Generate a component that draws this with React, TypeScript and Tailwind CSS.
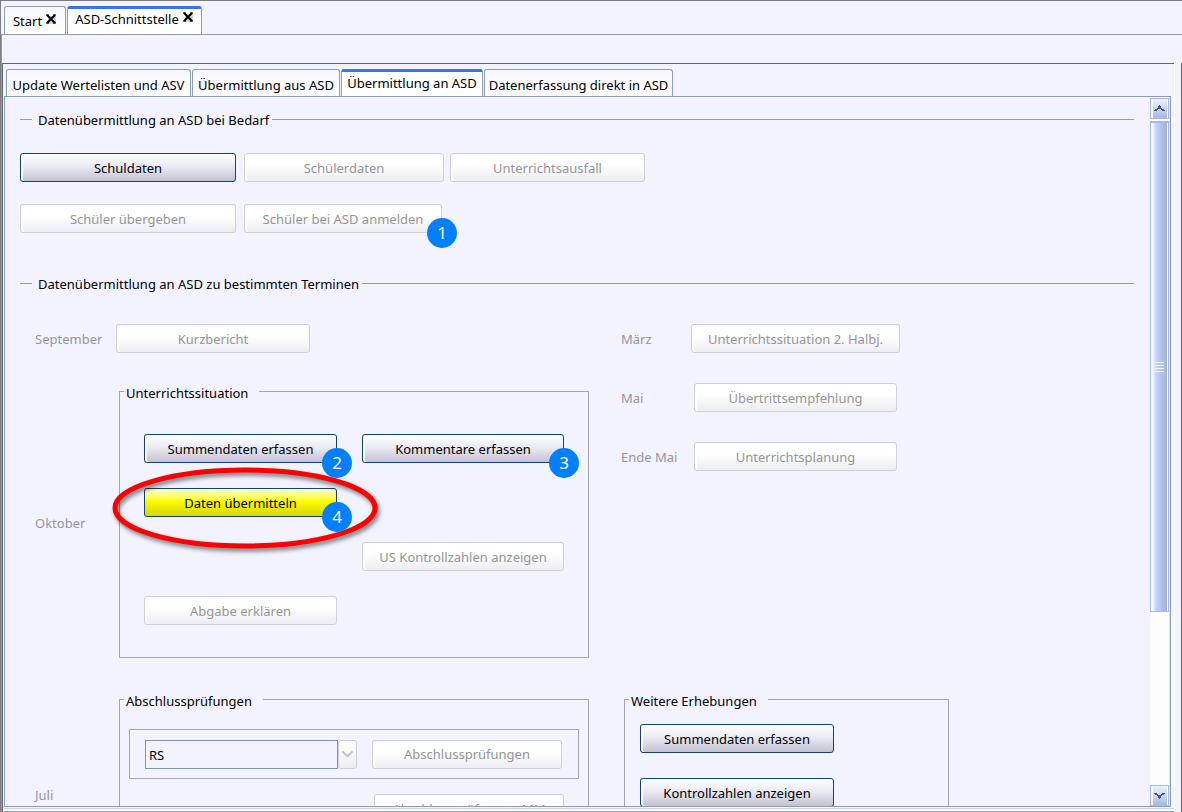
import type { ReactNode } from 'react';
import clsx from 'clsx';

type ActionProps = {
  children: ReactNode;
  width: string;
  disabled?: boolean;
  highlight?: boolean;
};

function Action({ children, width, disabled, highlight }: ActionProps) {
  return (
    <button
      type="button"
      disabled={disabled}
      className={clsx(
        'h-[29px] shrink-0 rounded-[3px] border bg-linear-to-b text-center whitespace-nowrap',
        width,
        disabled && 'border-[#cfcfda] from-white from-40% to-[#ededf2] text-[#969696] shadow-[inset_2px_0_0_#ffffff]',
        highlight && 'border-[#14417c] from-[#ffffc8] via-[#ffff00] via-40% to-[#d6d600]',
        !disabled && !highlight && 'border-[#14417c] from-white via-[#e8e8f3] via-50% to-[#c3c3d0] shadow-[inset_2px_0_0_#ffffff]',
      )}
    >
      {children}
    </button>
  );
}

function Badge({ children }: { children: ReactNode }) {
  return (
    <span className="absolute -right-[15px] -bottom-[15px] flex size-[30px] items-center justify-center rounded-full bg-[#0080ff] text-[17px] text-white">
      {children}
    </span>
  );
}

function SectionTitle({ children }: { children: ReactNode }) {
  return (
    <h2 className="flex items-center">
      <span className="h-px w-3 bg-[#9a9aa0]" />
      <span className="pt-[2px] pr-[3px] pl-[6px]">{children}</span>
      <span className="h-px flex-1 bg-[#9a9aa0]" />
    </h2>
  );
}

function Group({ title, size, padding, children }: { title: string; size: string; padding: string; children: ReactNode }) {
  return (
    <fieldset className={clsx('border border-[#a5a5b2]', size)}>
      <legend className="ml-1 pt-1 pr-[11px] pl-[2px]">{title}</legend>
      <div className={padding}>{children}</div>
    </fieldset>
  );
}

function CloseIcon() {
  return (
    <svg width="12" height="11" viewBox="0 0 12 11" aria-hidden="true">
      <path d="M3 2h8v8H3z" fill="#d2d2e0" />
      <path d="M1 1h3M8 1h3M1 9h3M8 9h3" stroke="#000" strokeWidth="1" />
      <path d="M2 1l8 8M10 1L2 9" stroke="#000" strokeWidth="2" />
    </svg>
  );
}

function Tab({ label, width, selected, closable }: { label: string; width: string; selected?: boolean; closable?: boolean }) {
  return (
    <button
      type="button"
      role="tab"
      aria-selected={!!selected}
      className={clsx(
        'flex items-center justify-center rounded-t-[3px] border-x border-[#8c9db8] whitespace-nowrap',
        width,
        closable ? 'h-7 gap-[3px]' : 'h-[27px]',
        selected ? 'border-t-3 border-t-[#3375ee] bg-white' : 'border-t bg-linear-to-b from-[#f6f6fe] to-white',
        selected && (closable ? 'pb-[5px]' : 'pb-[2px]'),
        !selected && (closable ? 'pt-px' : 'pt-[3px]'),
      )}
    >
      {label}
      {closable && <span className="mb-1"><CloseIcon /></span>}
    </button>
  );
}

function ScrollButton({ down }: { down?: boolean }) {
  return (
    <button
      type="button"
      aria-label={down ? 'Nach unten' : 'Nach oben'}
      className="flex h-[21px] items-center justify-center border border-[#a9bcdf] bg-linear-to-b from-[#edf2ff] to-[#a9b8dc] shadow-[inset_2px_0_0_#f6f8ff,inset_-1px_0_0_#ffffff]"
    >
      <svg width="11" height="7" viewBox="0 0 11 7" className={clsx(down && 'rotate-180')} aria-hidden="true">
        <path d="M0 5h1V4h2V3h1V2h3v1h1v1h2v1h1v1H8V5H7V4H4v1H3v1H0z" fill="#42557f" />
        <path d="M5 0h1v1H5zM4 1h3v1H4z" fill="#42557f" />
      </svg>
    </button>
  );
}

function ScrollBar() {
  return (
    <div className="flex w-5 shrink-0 flex-col border-r border-[#dfe5f3] bg-[#fdfdfd] pt-px">
      <ScrollButton />
      <div className="flex flex-1 flex-col pt-[2px]">
        <div className="flex h-[74%] flex-col items-center justify-center gap-[2px] border border-t-2 border-[#a9bcdf] bg-linear-to-r from-[#f4f7ff] from-10% via-[#c3d3fc] via-30% to-[#9fadd0] shadow-[inset_-1px_0_0_#ffffff]">
          {[0, 1, 2, 3].map((i) => (
            <span key={i} className="h-px w-[9px] bg-[#f4f7ff]" />
          ))}
        </div>
      </div>
      <ScrollButton down />
    </div>
  );
}

const terms = [
  { month: 'März', label: 'Unterrichtssituation 2. Halbj.', width: 'w-[209px]', indent: '' },
  { month: 'Mai', label: 'Übertrittsempfehlung', width: 'w-[203px]', indent: 'pl-[3px]' },
  { month: 'Ende Mai', label: 'Unterrichtsplanung', width: 'w-[203px]', indent: 'pl-[3px]' },
];

function OnDemand() {
  return (
    <section className="flex flex-col gap-[25px]">
      <SectionTitle>Datenübermittlung an ASD bei Bedarf</SectionTitle>
      <div className="flex flex-col gap-[22px]">
        <div className="flex">
          <Action width="w-[216px]">Schuldaten</Action>
          <div className="ml-2 flex gap-[6px]">
            <Action width="w-[200px]" disabled>Schülerdaten</Action>
            <Action width="w-[195px]" disabled>Unterrichtsausfall</Action>
          </div>
        </div>
        <div className="flex gap-2">
          <Action width="w-[216px]" disabled>Schüler übergeben</Action>
          <div className="relative flex">
            <Action width="w-[198px]" disabled>Schüler bei ASD anmelden</Action>
            <Badge>1</Badge>
          </div>
        </div>
      </div>
    </section>
  );
}

function TeachingSituation() {
  return (
    <Group title="Unterrichtssituation" size="h-[277px] w-[470px]" padding="pt-[33px] pl-6">
      <div className="grid grid-cols-[193px_202px] gap-[25px]">
        <div className="relative flex">
          <Action width="w-full">Summendaten erfassen</Action>
          <Badge>2</Badge>
        </div>
        <div className="relative flex">
          <Action width="w-full">Kommentare erfassen</Action>
          <Badge>3</Badge>
        </div>
        <div className="relative col-start-1 row-start-2 flex">
          <Action width="w-full" highlight>Daten übermitteln</Action>
          <svg
            className="pointer-events-none absolute -top-[26px] -left-[35px] h-[92px] w-[274px] max-w-none drop-shadow-[2px_3px_2px_rgba(0,0,0,0.5)]"
            viewBox="0 0 274 92"
            aria-hidden="true"
          >
            <ellipse cx="136" cy="46" rx="130" ry="38" fill="none" stroke="#ff0000" strokeWidth="5" />
          </svg>
          <Badge>4</Badge>
        </div>
        <div className="col-start-2 row-start-3 flex">
          <Action width="w-full" disabled>US Kontrollzahlen anzeigen</Action>
        </div>
        <div className="col-start-1 row-start-4 flex">
          <Action width="w-full" disabled>Abgabe erklären</Action>
        </div>
      </div>
    </Group>
  );
}

function FinalExams() {
  return (
    <Group title="Abschlussprüfungen" size="h-[211px] w-[470px]" padding="px-[9px] pt-5">
      <div className="flex h-[50px] items-center border border-[#a5a5b2] pl-[15px]">
        <select
          aria-label="Schulart"
          className="h-[29px] w-[193px] appearance-none border border-[#7c95bd] bg-transparent px-[3px] pt-px"
          defaultValue="RS"
        >
          <option>RS</option>
        </select>
        <span className="mr-[15px] flex h-[29px] w-[19px] items-center justify-center rounded-[3px] border border-[#cfcfda] bg-linear-to-b from-white to-[#ededf2]">
          <svg width="11" height="8" viewBox="0 0 11 8" aria-hidden="true">
            <path d="M0 1h2v1h1v1h1v1h3V3h1V2h1V1h2v2h-1v1H9v1H8v1H7v1H4V6H3V5H2V4H1V3H0z" fill="#c9c9d6" />
          </svg>
        </span>
        <Action width="w-[190px]" disabled>Abschlussprüfungen</Action>
      </div>
      <div className="mt-[15px] ml-[245px] flex">
        <Action width="w-[190px]" disabled>Abschlussprüfungen MM</Action>
      </div>
    </Group>
  );
}

function FixedDates() {
  return (
    <section className="mt-[41px] flex flex-col gap-8">
      <SectionTitle>Datenübermittlung an ASD zu bestimmten Terminen</SectionTitle>
      <div className="grid grid-cols-[554px_1fr] gap-x-8 gap-y-[31px] pl-[15px]">
        <div className="flex flex-col gap-7">
          <div className="flex items-center">
            <span className="w-[81px] text-[#969696]">September</span>
            <Action width="w-[194px]" disabled>Kurzbericht</Action>
          </div>
          <div className="flex items-center justify-between">
            <span className="pt-[6px] text-[#969696]">Oktober</span>
            <TeachingSituation />
          </div>
        </div>
        <div className="flex flex-col gap-[30px]">
          {terms.map((t) => (
            <div key={t.month} className="flex items-center">
              <span className="w-[70px] text-[#969696]">{t.month}</span>
              <span className={clsx('flex', t.indent)}>
                <Action width={t.width} disabled>{t.label}</Action>
              </span>
            </div>
          ))}
        </div>
        <div className="flex items-center justify-between">
          <span className="text-[#969696]">Juli</span>
          <FinalExams />
        </div>
        <div className="pl-[3px]">
          <Group title="Weitere Erhebungen" size="h-[211px] w-[325px]" padding="pt-[15px] pl-[15px]">
            <div className="flex flex-col gap-[25px]">
              <Action width="w-[194px]">Summendaten erfassen</Action>
              <Action width="w-[194px]">Kontrollzahlen anzeigen</Action>
            </div>
          </Group>
        </div>
      </div>
    </section>
  );
}

export default function App() {
  return (
    <div className="flex h-screen flex-col border-t border-l border-[#7b7b85] bg-[#f3f3ff] font-['Noto_Sans',sans-serif] text-[13px] leading-4 text-black">
      <div role="tablist" className="flex gap-px pt-[5px] pl-[3px]">
        <Tab label="Start" width="w-[62px]" closable />
        <Tab label="ASD-Schnittstelle" width="w-[135px]" selected closable />
      </div>
      <div className="flex min-h-0 flex-1 flex-col border-t border-l border-[#8c9db8]">
        <div className="h-7 shrink-0" />
        <div className="flex min-h-0 flex-1">
          <div className="flex min-w-0 flex-1 flex-col border-t border-l border-[#66666e] pt-[5px] pl-px">
            <div role="tablist" className="flex gap-px pl-[2px]">
              <Tab label="Update Wertelisten und ASV" width="w-[185px]" />
              <Tab label="Übermittlung aus ASD" width="w-[148px]" />
              <Tab label="Übermittlung an ASD" width="w-[142px]" selected />
              <Tab label="Datenerfassung direkt in ASD" width="w-[189px]" />
            </div>
            <div className="mr-[3px] flex min-h-0 flex-1 border border-[#8c9db8]">
              <main className="min-w-0 flex-1 overflow-auto pt-[13px] pr-4 pb-4 pl-[15px] [scrollbar-width:none]">
                <OnDemand />
                <FixedDates />
              </main>
              <ScrollBar />
            </div>
            <div className="mt-px h-1 shrink-0 border-t border-b border-t-[#cfcfdf] border-b-[#8c9db8] bg-[#fafaff]" />
          </div>
          <div className="w-2 shrink-0 border-r border-l border-r-[#66666e] border-l-white" />
        </div>
      </div>
    </div>
  );
}
